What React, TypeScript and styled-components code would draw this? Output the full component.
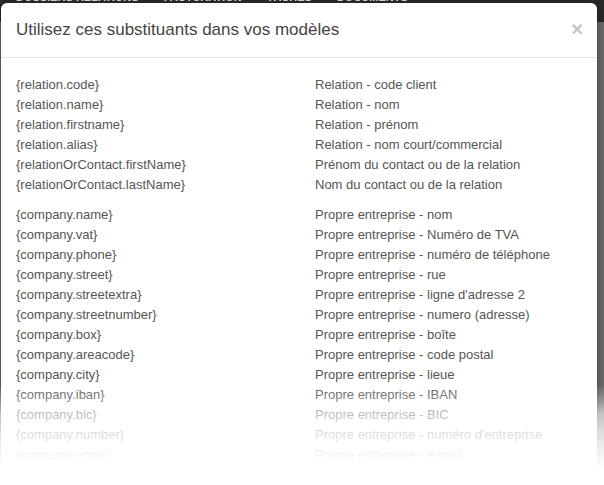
import React from "react";
import styled, { createGlobalStyle } from "styled-components";

const GlobalStyle = createGlobalStyle`
    html, body {
        margin: 0;
        padding: 0;
        height: 100%;
        overflow: hidden;
    }
    body {
        background: #6a6a6a;
        font-family: "Liberation Sans", Arial, sans-serif;
    }
`;

const relationVars = [
    ["{relation.code}", "Relation - code client"],
    ["{relation.name}", "Relation - nom"],
    ["{relation.firstname}", "Relation - prénom"],
    ["{relation.alias}", "Relation - nom court/commercial"],
    ["{relationOrContact.firstName}", "Prénom du contact ou de la relation"],
    ["{relationOrContact.lastName}", "Nom du contact ou de la relation"],
];

const companyVars = [
    ["{company.name}", "Propre entreprise - nom"],
    ["{company.vat}", "Propre entreprise - Numéro de TVA"],
    ["{company.phone}", "Propre entreprise - numéro de téléphone"],
    ["{company.street}", "Propre entreprise - rue"],
    ["{company.streetextra}", "Propre entreprise - ligne d'adresse 2"],
    ["{company.streetnumber}", "Propre entreprise - numero (adresse)"],
    ["{company.box}", "Propre entreprise - boîte"],
    ["{company.areacode}", "Propre entreprise - code postal"],
    ["{company.city}", "Propre entreprise - lieue"],
    ["{company.iban}", "Propre entreprise - IBAN"],
    ["{company.bic}", "Propre entreprise - BIC"],
    ["{company.number}", "Propre entreprise - numéro d'entreprise"],
    ["{company.email}", "Propre entreprise - e-mail"],
];

const App = () => {
    return (
        <Page>
            <GlobalStyle />
            {/* -----NAVBAR BEHIND THE MODAL----- */}
            <TopBar>
                <NavItem>Dossiers relations</NavItem>
                <NavItem>Facturation</NavItem>
                <NavItem>Tâches</NavItem>
                <NavItem>Documents</NavItem>
            </TopBar>

            {/* -----MODAL----- */}
            <Modal>
                <ModalHeader>
                    <Title>Utilisez ces substituants dans vos modèles</Title>
                    <Close aria-label="Fermer">×</Close>
                </ModalHeader>
                <ModalBody>
                    <Group>
                        {relationVars.map(([key, label]) => (
                            <Row key={key}>
                                <Cell>{key}</Cell>
                                <Cell>{label}</Cell>
                            </Row>
                        ))}
                    </Group>
                    <Group>
                        {companyVars.map(([key, label]) => (
                            <Row key={key}>
                                <Cell>{key}</Cell>
                                <Cell>{label}</Cell>
                            </Row>
                        ))}
                    </Group>
                </ModalBody>
            </Modal>

            <Fade />
        </Page>
    );
};

//* ----- styled components -----
const Page = styled.div`
    position: relative;
    height: 485px;
    overflow: hidden;
    background: linear-gradient(#2a2a2a 0 22px, #6a6a6a 22px);
`;

const TopBar = styled.nav`
    position: absolute;
    top: -9px;
    left: 0;
    right: 0;
    display: flex;
    gap: 25px;
    padding-left: 16px;
`;

const NavItem = styled.span`
    color: #d8d8d8;
    font-weight: bold;
    font-size: 11px;
    text-transform: uppercase;
`;

const Modal = styled.div`
    position: relative;
    margin: 3px 7px 0 1px;
    background: #fff;
    border-radius: 6px 6px 0 0;
    height: 500px;
    box-shadow: 0 3px 9px rgba(0, 0, 0, 0.4);
`;

const ModalHeader = styled.div`
    display: flex;
    align-items: center;
    justify-content: space-between;
    height: 54px;
    padding: 0 14px 0 15px;
    border-bottom: 1px solid #e5e5e5;
`;

const Title = styled.h4`
    margin: 0;
    font-weight: normal;
    font-size: 17px;
    color: #444;
`;

const Close = styled.button`
    border: 0;
    background: none;
    padding: 0;
    color: #c4c4c4;
    font-size: 20px;
    font-weight: bold;
    line-height: 1;
    margin-top: -3px;
`;

const ModalBody = styled.div`
    padding: 17px 15px;
    display: flex;
    flex-direction: column;
    gap: 10px;
`;

const Group = styled.div`
    display: flex;
    flex-direction: column;
`;

const Row = styled.div`
    display: grid;
    grid-template-columns: 299px 1fr;
    line-height: 20px;
    font-size: 13px;
    color: #555;
`;

const Cell = styled.span`
    white-space: nowrap;
`;

const Fade = styled.div`
    position: absolute;
    left: 0;
    right: 0;
    bottom: 0;
    height: 100px;
    background: linear-gradient(
        rgba(255, 255, 255, 0) 0%,
        rgba(255, 255, 255, 0.3) 15%,
        rgba(255, 255, 255, 0.62) 29%,
        rgba(255, 255, 255, 0.8) 49%,
        rgba(255, 255, 255, 0.93) 69%,
        #fff 85%
    );
    pointer-events: none;
`;

export default App;
